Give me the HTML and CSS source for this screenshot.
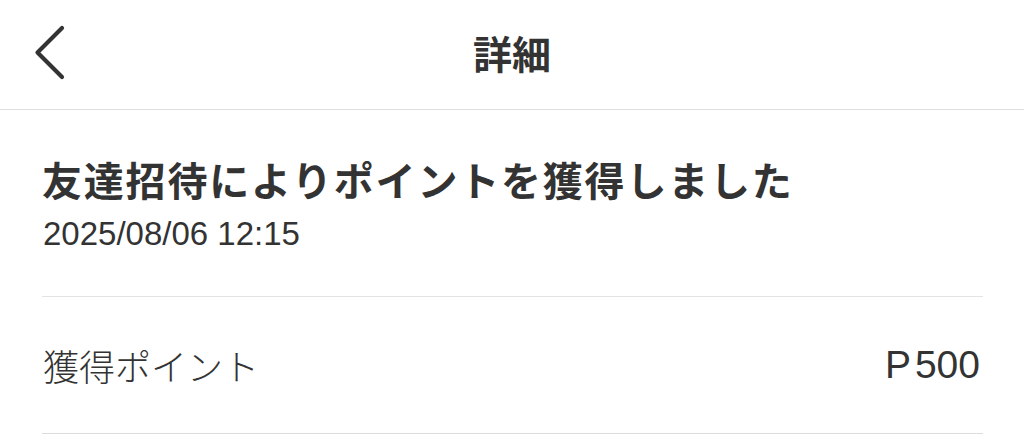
FILE: index.html
```html
<!DOCTYPE html>
<html lang="ja">
<head>
<meta charset="utf-8">
<title>詳細</title>
<link rel="stylesheet" href="styles.css">
</head>
<body>
<header class="nav">
  <div class="nav-side">
    <button class="back" aria-label="戻る">
      <svg width="40" height="60" viewBox="0 0 40 60"><path d="M32 6 L7.5 30.5 L32 55" fill="none" stroke="#333" stroke-width="4.2" stroke-linecap="round" stroke-linejoin="round"/></svg>
    </button>
  </div>
  <h1 class="nav-title">詳細</h1>
  <div class="nav-side"></div>
</header>
<main class="content">
  <section class="summary">
    <h2 class="headline">友達招待によりポイントを獲得しました</h2>
    <p class="date">2025/08/06 12:15</p>
  </section>
  <div class="row">
    <span class="row-label">獲得ポイント</span>
    <span class="row-value"><span class="unit">P</span>500</span>
  </div>
</main>
</body>
</html>
```

FILE: styles.css
```css
* { box-sizing: border-box; }
html, body {
  margin: 0;
  padding: 0;
  background: #fff;
}
body {
  width: 1024px;
  font-family: "Liberation Sans", "Noto Sans CJK JP", sans-serif;
  color: #333;
}
.nav {
  height: 110px;
  display: grid;
  grid-template-columns: 1fr auto 1fr;
  align-items: center;
  border-bottom: 1px solid #dedede;
  padding-bottom: 6px;
}
.nav-side {
  display: flex;
  align-items: center;
}
.back {
  margin-left: 30px;
  padding: 0;
  border: 0;
  background: none;
  display: flex;
}
.nav-title {
  margin: 0;
  font-family: "Noto Sans CJK JP", sans-serif;
  font-size: 39px;
  font-weight: 700;
  line-height: 48px;
  color: #333;
}
.content {
  padding: 0 41px 0 42px;
}
.summary {
  padding-top: 45px;
  padding-bottom: 42px;
  border-bottom: 1px solid #e3e3e3;
}
.headline {
  margin: 0;
  font-family: "Noto Sans CJK JP", sans-serif;
  font-size: 40px;
  font-weight: 700;
  line-height: 48px;
  letter-spacing: 1.8px;
  color: #333;
}
.date {
  margin: 11px 0 0 1px;
  font-family: "Liberation Sans", sans-serif;
  font-size: 33px;
  line-height: 40px;
  color: #333;
}
.row {
  height: 137px;
  display: flex;
  align-items: center;
  justify-content: space-between;
  border-bottom: 1px solid #dcdcdc;
}
.row-label {
  font-family: "Noto Sans CJK JP", sans-serif;
  font-size: 36px;
  font-weight: 300;
  color: #333;
  padding-left: 1px;
}
.row-value {
  font-family: "Liberation Sans", sans-serif;
  font-size: 39px;
  color: #333;
  padding-right: 3px;
}
.unit {
  margin-right: 4px;
}
```
